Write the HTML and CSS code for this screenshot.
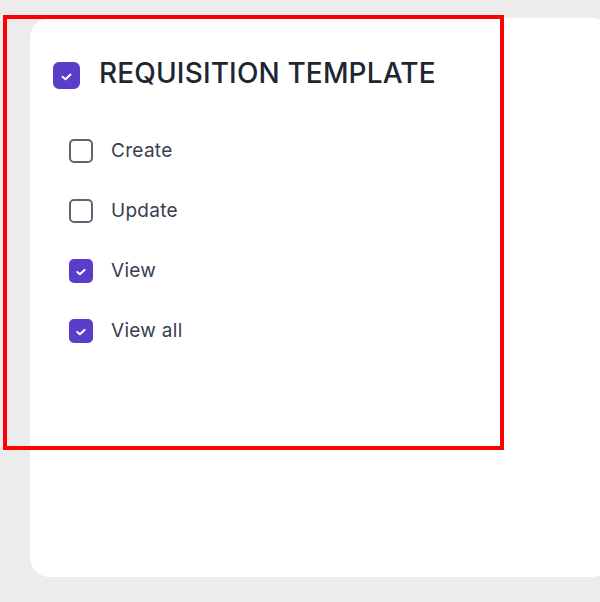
FILE: index.html
```html
<!DOCTYPE html>
<html>
<head>
<meta charset="utf-8">
<link rel="stylesheet" href="styles.css">
</head>
<body>
<div class="page">
  <div class="card">
    <div class="header">
      <span class="box box-lg checked">
        <svg viewBox="0 0 27 27" width="27" height="27"><path d="M9.5 14.8l3 2.5 5-4.8" fill="none" stroke="#fff" stroke-width="2" stroke-linecap="round" stroke-linejoin="round"/></svg>
      </span>
      <span class="title">REQUISITION TEMPLATE</span>
    </div>
    <ul class="perms">
      <li class="perm"><span class="box"></span><span class="label">Create</span></li>
      <li class="perm"><span class="box"></span><span class="label">Update</span></li>
      <li class="perm"><span class="box checked"><svg viewBox="0 0 24 24" width="24" height="24"><path d="M8.3 13l2.6 2.2 4.6-4.3" fill="none" stroke="#fff" stroke-width="2" stroke-linecap="round" stroke-linejoin="round"/></svg></span><span class="label">View</span></li>
      <li class="perm"><span class="box checked"><svg viewBox="0 0 24 24" width="24" height="24"><path d="M8.3 13l2.6 2.2 4.6-4.3" fill="none" stroke="#fff" stroke-width="2" stroke-linecap="round" stroke-linejoin="round"/></svg></span><span class="label">View all</span></li>
    </ul>
  </div>
  <div class="highlight"></div>
</div>
</body>
</html>
```
FILE: styles.css
```css
html, body {
  margin: 0;
  padding: 0;
}
body {
  background: #ececec;
  width: 600px;
  height: 602px;
  overflow: hidden;
  font-family: Inter, "Noto Sans", sans-serif;
}
.page {
  position: relative;
  padding: 18px 0 0 30px;
}
.card {
  width: 582px;
  height: 559px;
  box-sizing: border-box;
  background: #ffffff;
  border-radius: 20px;
  padding: 44px 0 0 23px;
}
.header {
  display: flex;
  align-items: center;
  gap: 19px;
  height: 27px;
}
.title {
  font-size: 28px;
  font-weight: 500;
  color: #1e2633;
  letter-spacing: 0.15px;
  line-height: 27px;
  margin-top: -4px;
}
.box {
  width: 24px;
  height: 24px;
  box-sizing: border-box;
  border: 2px solid #5f6672;
  border-radius: 5px;
  flex: none;
  display: block;
}
.box svg {
  display: block;
  margin: -2px;
}
.box.checked {
  background: #5a3ec8;
  border-color: #5a3ec8;
}
.box-lg {
  width: 27px;
  height: 27px;
  border-radius: 6px;
}
.perms {
  list-style: none;
  margin: 50px 0 0 16px;
  padding: 0;
  display: flex;
  flex-direction: column;
  gap: 36px;
}
.perm {
  display: flex;
  align-items: center;
  gap: 18px;
  height: 24px;
}
.label {
  font-size: 19px;
  color: #374050;
  letter-spacing: 0.3px;
  line-height: 24px;
}
.highlight {
  position: absolute;
  left: 3px;
  top: 15px;
  width: 501px;
  height: 435px;
  box-sizing: border-box;
  border: 4px solid #ff0000;
}
```
